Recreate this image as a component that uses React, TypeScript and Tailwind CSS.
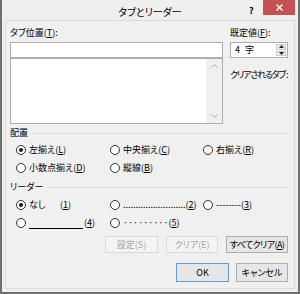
const Radio = ({ on, label }: { on?: boolean; label: React.ReactNode }) => {
  return (
    <div className="flex items-center h-full">
      <div className="w-[10px] h-[10px] rounded-full border border-[#333333] bg-white flex items-center justify-center shrink-0">
        {on && <div className="w-[4px] h-[4px] rounded-full bg-[#1a1a1a]"></div>}
      </div>
      <div className="ml-[3px] whitespace-nowrap leading-[12px]">{label}</div>
    </div>
  );
};

const GroupHead = ({ title }: { title: string }) => {
  return (
    <div className="flex items-center h-[12px]">
      <div className="leading-[12px]">{title}</div>
      <div className="flex-1 h-px bg-[#dcdcdc] ml-[4px]"></div>
    </div>
  );
};

const Btn = ({
  label,
  disabled,
  primary,
  w,
}: {
  label: React.ReactNode;
  disabled?: boolean;
  primary?: boolean;
  w: string;
}) => {
  return (
    <div
      className={`${w} h-full border flex items-center justify-center leading-[12px] whitespace-nowrap ${
        disabled
          ? "border-[#d9d9d9] bg-[#f4f4f4] text-[#a3a3a3]"
          : primary
          ? "border-[#5b9fe0] bg-[#e6e6e6]"
          : "border-[#adadad] bg-[#e6e6e6]"
      }`}
    >
      {label}
    </div>
  );
};

const App = () => {
  return (
    <div className="w-[300px] h-[294px] flex flex-col bg-[#efefef] border-x-2 border-b-2 border-[#6f6f6f] text-[9px] text-black font-['Noto_Sans_CJK_JP','Noto_Sans',sans-serif] [font-feature-settings:'palt']">
      {/* title bar */}
      <div className="h-[20px] relative shrink-0">
        <div className="text-center text-[10px] leading-[12px] pt-[6px]">タブとリーダー</div>
        <div className="absolute left-[247px] top-[5px] text-[9px] font-bold leading-[12px]">?</div>
        <div className="absolute left-[261px] top-0 w-[32px] h-[15px] bg-[#c75050] flex items-center justify-center">
          <svg width="7" height="7" viewBox="0 0 7 7">
            <path d="M0.5 0.5 L6.5 6.5 M6.5 0.5 L0.5 6.5" stroke="white" strokeWidth="1.4" />
          </svg>
        </div>
      </div>

      {/* content */}
      <div className="flex-1 mx-[3px] mb-[3px] border border-[#dadada] bg-[#f0f0f0] pl-[4px] pr-[6px] pt-[6px] flex flex-col">
        <div className="flex">
          <div className="w-[213px] flex flex-col">
            <div className="h-[15px] leading-[12px]">
              タブ位置(<span className="underline">T</span>):
            </div>
            <div className="h-[16px] border border-[#abadb3] bg-white"></div>
            <div className="h-[66px] border border-[#abadb3] bg-white flex justify-end">
              <div className="w-[16px] bg-[#f0f0f0] flex flex-col items-center justify-between py-[5px]">
                <svg width="7" height="4" viewBox="0 0 7 4">
                  <path d="M0.5 3.5 L3.5 0.5 L6.5 3.5" stroke="#a6a6a6" fill="none" strokeWidth="1" />
                </svg>
                <svg width="7" height="4" viewBox="0 0 7 4">
                  <path d="M0.5 0.5 L3.5 3.5 L6.5 0.5" stroke="#a6a6a6" fill="none" strokeWidth="1" />
                </svg>
              </div>
            </div>
          </div>
          <div className="ml-[7px] w-[58px] flex flex-col">
            <div className="h-[15px] leading-[12px]">
              既定値(<span className="underline">F</span>):
            </div>
            <div className="h-[16px] border border-[#abadb3] bg-white flex">
              <div className="flex-1 pl-[4px] leading-[14px] flex">
                <span>4</span>
                <span className="ml-[5px]">字</span>
              </div>
              <div className="w-[11px] flex flex-col gap-px py-px pr-px">
                <div className="flex-1 border border-[#c9c9c9] bg-[#ececec] flex items-center justify-center">
                  <svg width="5" height="3" viewBox="0 0 5 3">
                    <path d="M0 3 L2.5 0 L5 3 Z" fill="#222" />
                  </svg>
                </div>
                <div className="flex-1 border border-[#c9c9c9] bg-[#ececec] flex items-center justify-center">
                  <svg width="5" height="3" viewBox="0 0 5 3">
                    <path d="M0 0 L2.5 3 L5 0 Z" fill="#222" />
                  </svg>
                </div>
              </div>
            </div>
            <div className="mt-[11px] leading-[12px] whitespace-nowrap tracking-[-1.2px]">
              クリアされるタブ :
            </div>
          </div>
        </div>

        {/* alignment */}
        <div className="mt-[3px]">
          <GroupHead title="配置" />
        </div>
        <div className="mt-[2px] pl-[6px] grid grid-cols-[94px_93px_1fr]">
          <div className="h-[18px]">
            <Radio on label={<>左揃え(<span className="underline">L</span>)</>} />
          </div>
          <div className="h-[18px]">
            <Radio label={<>中央揃え(<span className="underline">C</span>)</>} />
          </div>
          <div className="h-[18px]">
            <Radio label={<>右揃え(<span className="underline">R</span>)</>} />
          </div>
          <div className="h-[18px]">
            <Radio label={<>小数点揃え(<span className="underline">D</span>)</>} />
          </div>
          <div className="h-[18px]">
            <Radio label={<>縦線(<span className="underline">B</span>)</>} />
          </div>
        </div>

        {/* leader */}
        <div className="mt-[4px]">
          <GroupHead title="リーダー" />
        </div>
        <div className="mt-[3px] pl-[6px] grid grid-cols-[94px_93px_1fr]">
          <div className="h-[18px]">
            <Radio
              on
              label={
                <span className="flex">
                  <span className="w-[31px]">なし</span>(<span className="underline">1</span>)
                </span>
              }
            />
          </div>
          <div className="h-[18px]">
            <Radio label={<>.........................(<span className="underline">2</span>)</>} />
          </div>
          <div className="h-[18px]">
            <Radio label={<>--------(<span className="underline">3</span>)</>} />
          </div>
          <div className="h-[17px]">
            <Radio
              label={
                <span className="flex items-end">
                  <span className="inline-block w-[54px] h-[9px] border-b border-black mr-px"></span>(
                  <span className="underline">4</span>)
                </span>
              }
            />
          </div>
          <div className="h-[17px]">
            <Radio label={<>·········(<span className="underline">5</span>)</>} />
          </div>
        </div>

        {/* buttons */}
        <div className="mt-[5px] h-[17px] flex justify-end gap-[8px]">
          <Btn w="w-[53px]" disabled label="設定(S)" />
          <Btn w="w-[52px]" disabled label="クリア(E)" />
          <Btn
            w="w-[62px]"
            label={
              <span className="tracking-[-0.6px]">
                すべてクリア(<span className="underline">A</span>)
              </span>
            }
          />
        </div>
        <div className="mt-[10px] h-[19px] flex justify-end gap-[7px]">
          <Btn w="w-[53px]" primary label="OK" />
          <Btn w="w-[52px]" label="キャンセル" />
        </div>
      </div>
    </div>
  );
};

export default App;
